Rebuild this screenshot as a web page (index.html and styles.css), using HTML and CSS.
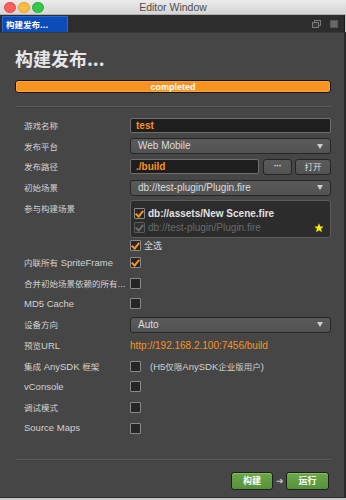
FILE: index.html
```html
<!DOCTYPE html>
<html>
<head>
<meta charset="utf-8">
<link rel="stylesheet" href="styles.css">
</head>
<body>
<div class="window">
  <div class="titlebar">
    <div class="lights">
      <span class="light red"></span><span class="light yellow"></span><span class="light green"></span>
    </div>
    <div class="title">Editor Window</div>
  </div>
  <div class="tabbar">
    <div class="tab">构建发布...</div>
    <div class="tabicons">
      <svg width="9" height="8" viewBox="0 0 9 8"><rect x="2.5" y="0.5" width="6" height="5" fill="none" stroke="#7a7a7a"/><rect x="0.5" y="2.5" width="6" height="5" fill="#3a3a3a" stroke="#7a7a7a"/></svg>
      <svg width="8" height="8" viewBox="0 0 8 8"><rect x="0" y="0" width="8" height="8" fill="#555"/><path d="M1 2h6M1 4h6M1 6h6" stroke="#7d7d7d" stroke-width="1"/></svg>
    </div>
  </div>
  <div class="panel">
    <h1 class="heading">构建发布...</h1>
    <div class="progress"><span>completed</span></div>
    <div class="sep first"></div>
    <div class="form">
      <div class="row"><div class="label"><span class="zh">游戏名称</span></div><div class="ctrl"><div class="input">test</div></div></div>
      <div class="row"><div class="label"><span class="zh">发布平台</span></div><div class="ctrl"><div class="select">Web Mobile<span class="arrow"></span></div></div></div>
      <div class="row"><div class="label"><span class="zh">发布路径</span></div><div class="ctrl"><div class="input grow">./build</div><div class="btn dots">···</div><div class="btn open">打开</div></div></div>
      <div class="row"><div class="label"><span class="zh">初始场景</span></div><div class="ctrl"><div class="select">db://test-plugin/Plugin.fire<span class="arrow"></span></div></div></div>
      <div class="row scenes">
        <div class="label"><span class="zh">参与构建场景</span></div>
        <div class="ctrl col">
          <div class="scenebox">
            <div class="scene"><span class="cb checked"></span><span class="scenename">db://assets/New Scene.fire</span></div>
            <div class="scene disabled"><span class="cb checked dim"></span><span class="scenename">db://test-plugin/Plugin.fire</span>
              <svg class="star" width="10" height="10" viewBox="0 0 10 10"><path d="M5 0.3L6.3 3.4 9.7 3.6 7.1 5.8 7.9 9.2 5 7.3 2.1 9.2 2.9 5.8 0.3 3.6 3.7 3.4Z" fill="#f5e80c"/></svg>
            </div>
          </div>
          <div class="selectall"><span class="cb checked"></span><span class="zh">全选</span></div>
        </div>
      </div>
      <div class="row"><div class="label"><span class="zh">内联所有</span> SpriteFrame</div><div class="ctrl"><span class="cb checked"></span></div></div>
      <div class="row"><div class="label"><span class="zh">合并初始场景依赖的所有</span>...</div><div class="ctrl"><span class="cb"></span></div></div>
      <div class="row"><div class="label">MD5 Cache</div><div class="ctrl"><span class="cb"></span></div></div>
      <div class="row"><div class="label"><span class="zh">设备方向</span></div><div class="ctrl"><div class="select">Auto<span class="arrow"></span></div></div></div>
      <div class="row"><div class="label"><span class="zh">预览</span>URL</div><div class="ctrl"><span class="url">http://192.168.2.100:7456/build</span></div></div>
      <div class="row"><div class="label"><span class="zh">集成</span> AnySDK <span class="zh">框架</span></div><div class="ctrl"><span class="cb"></span><span class="note">(H5<span class="zh">仅限</span>AnySDK<span class="zh">企业版用户</span>)</span></div></div>
      <div class="row"><div class="label">vConsole</div><div class="ctrl"><span class="cb"></span></div></div>
      <div class="row"><div class="label"><span class="zh">调试模式</span></div><div class="ctrl"><span class="cb"></span></div></div>
      <div class="row"><div class="label">Source Maps</div><div class="ctrl"><span class="cb"></span></div></div>
    </div>
    <div class="sep second"></div>
    <div class="actions">
      <div class="gbtn build">构建</div>
      <span class="next">➔</span>
      <div class="gbtn run">运行</div>
    </div>
  </div>
</div>
</body>
</html>
```

FILE: styles.css
```css
* { box-sizing: border-box; }
html, body { margin: 0; padding: 0; }
body {
  width: 346px;
  height: 500px;
  background: #c9c9c9;
  font-family: "Liberation Sans", "Noto Sans CJK SC", sans-serif;
  overflow: hidden;
}
.window {
  width: 346px;
  height: 500px;
  display: flex;
  flex-direction: column;
}
.titlebar {
  height: 15px;
  background: linear-gradient(#ebebeb, #d5d5d5);
  border-bottom: 1px solid #b1b1b1;
  position: relative;
  display: flex;
  align-items: center;
  justify-content: center;
}
.lights {
  position: absolute;
  left: 4px;
  top: 1.5px;
  display: flex;
  gap: 2.5px;
}
.light {
  width: 11.5px;
  height: 11.5px;
  border-radius: 50%;
  display: block;
}
.red { background: #fc605b; border: 1px solid #de4a45; }
.yellow { background: #fdbc40; border: 1px solid #dea236; }
.green { background: #34c84a; border: 1px solid #27aa35; }
.title {
  font-size: 10.5px;
  color: #4d4d4d;
  line-height: 14px;
}
.zh {
  font-family: "Noto Sans CJK SC", sans-serif;
  font-size: 8.5px;
}
.tabbar {
  height: 17px;
  background: #2d2d2d;
  display: flex;
  align-items: stretch;
  padding-left: 2px;
  padding-right: 6px;
  border-right: 1px solid #1a1a1a;
  margin-right: 1px;
}
.tab {
  width: 66px;
  margin-top: 1px;
  background: #0b4cb8;
  border: 1px solid #2a6ad0;
  border-bottom: none;
  color: #fff;
  font-family: "Noto Sans CJK SC", sans-serif;
  font-weight: bold;
  font-size: 8.5px;
  line-height: 14px;
  padding-left: 3px;
}
.tabicons {
  margin-left: auto;
  display: flex;
  align-items: center;
  gap: 9px;
}
.panel {
  flex: 1;
  background: #464646;
  border-top: 1px solid #3a3a3a;
  border-right: 2px solid #2a2a2a;
  border-bottom: 1px solid #2c2c2c;
  margin-bottom: 2px;
  padding: 0 13px 0 15px;
  display: flex;
  flex-direction: column;
}
.heading {
  margin: 12.5px 0 0 0;
  font-family: "Noto Sans CJK SC", sans-serif;
  font-size: 18px;
  line-height: 24px;
  font-weight: bold;
  color: #e6e6e6;
}
.progress {
  margin-top: 10.5px;
  height: 13px;
  background: #f7931e;
  border: 1px solid #161616;
  border-radius: 3px;
  display: flex;
  align-items: center;
  justify-content: center;
  box-shadow: inset 0 0 0 1px #f9a443;
}
.progress span {
  color: #fff;
  font-size: 9px;
  font-weight: bold;
  line-height: 10px;
}
.sep {
  height: 2px;
  background: #5b5b5b;
  border-bottom: 1px solid #3d3d3d;
}
.sep.first { margin-top: 13px; }
.form {
  margin-top: 7px;
  display: flex;
  flex-direction: column;
}
.row {
  height: 20.75px;
  display: flex;
  align-items: center;
}
.label {
  width: 115px;
  padding-left: 9px;
  font-size: 9.5px;
  color: #d2d2d2;
  white-space: nowrap;
  line-height: 12px;
  overflow: hidden;
}
.ctrl {
  flex: 1;
  display: flex;
  align-items: center;
  gap: 3px;
}
.input {
  flex: 1;
  height: 15px;
  background: #1e1e1e;
  border: 1px solid #6e6e6e;
  border-radius: 2px;
  color: #f7931e;
  font-weight: bold;
  font-size: 10px;
  line-height: 13px;
  padding-left: 5px;
}
.select {
  flex: 1;
  height: 16px;
  background: linear-gradient(#5a5a5a, #525252);
  border: 1px solid #262626;
  border-radius: 3px;
  color: #dcdcdc;
  font-size: 10px;
  line-height: 14px;
  padding-left: 7px;
  display: flex;
  align-items: center;
}
.arrow {
  margin-left: auto;
  margin-right: 7px;
  width: 0;
  height: 0;
  border-left: 3.5px solid transparent;
  border-right: 3.5px solid transparent;
  border-top: 5px solid #cfcfcf;
}
.btn {
  height: 16px;
  background: linear-gradient(#5a5a5a, #525252);
  border: 1px solid #262626;
  border-radius: 3px;
  color: #dcdcdc;
  font-size: 8.5px;
  line-height: 13px;
  text-align: center;
  font-family: "Noto Sans CJK SC", sans-serif;
}
.btn.dots { width: 29px; margin-left: 1px; font-family: "Liberation Sans", sans-serif; font-size: 9px; font-weight: bold; letter-spacing: -0.5px; }
.btn.open { width: 36px; }
.row.scenes {
  height: 54px;
  align-items: flex-start;
}
.row.scenes .label { margin-top: 4px; }
.ctrl.col {
  flex-direction: column;
  align-items: stretch;
  gap: 0;
}
.scenebox {
  margin-top: 1.5px;
  height: 38px;
  background: #2c2c2c;
  border: 1px solid #5c5c5c;
  border-radius: 3px;
  padding: 6px 6px 0 3px;
}
.scene {
  height: 14px;
  display: flex;
  align-items: center;
  gap: 3px;
  font-size: 10px;
  color: #e2e2e2;
  font-weight: bold;
}
.scene.disabled { color: #6a6a6a; font-weight: normal; }
.star { margin-left: auto; }
.selectall {
  margin-top: 1px;
  height: 14px;
  display: flex;
  align-items: center;
  gap: 3px;
  color: #dcdcdc;
}
.selectall .zh { font-size: 9px; }
.cb {
  width: 11px;
  height: 11px;
  background: #262626;
  border: 1px solid #8a8a8a;
  border-radius: 1px;
  flex: none;
  position: relative;
}
.cb.checked::after {
  content: "";
  position: absolute;
  left: 2px;
  top: 0px;
  width: 3px;
  height: 6px;
  border-right: 2px solid #f7931e;
  border-bottom: 2px solid #f7931e;
  transform: rotate(40deg);
}
.cb.dim { border-color: #5a5a5a; background: #303030; }
.cb.dim::after { border-color: #6a6a6a; }
.url {
  color: #f7931e;
  font-size: 10px;
}
.note {
  margin-left: 6px;
  font-size: 9.5px;
  color: #d2d2d2;
}
.sep.second { margin-top: 20px; }
.actions {
  margin-top: 11px;
  display: flex;
  justify-content: flex-end;
  align-items: center;
  gap: 2px;
  padding-right: 2px;
}
.gbtn {
  height: 18px;
  background: linear-gradient(#6aa84a, #56923a);
  border: 1px solid #1e1e1e;
  border-radius: 3px;
  color: #fff;
  font-family: "Noto Sans CJK SC", sans-serif;
  font-weight: bold;
  font-size: 9px;
  line-height: 15px;
  text-align: center;
  box-shadow: inset 0 1px 0 #84bf63;
}
.gbtn.build { width: 42px; }
.gbtn.run { width: 43px; }
.next {
  color: #c8c8c8;
  font-size: 9px;
  width: 9px;
  text-align: center;
}
```
